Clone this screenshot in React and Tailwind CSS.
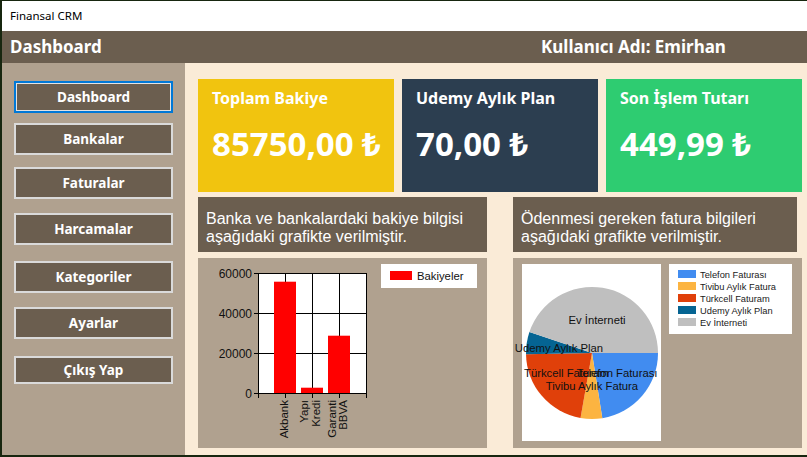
import React from 'react';

const menu = [
  { label: 'Dashboard', cls: 'mt-0 h-[32px]', active: true },
  { label: 'Bankalar', cls: 'mt-[10px] h-[32px]' },
  { label: 'Faturalar', cls: 'mt-[12px] h-[32px]' },
  { label: 'Harcamalar', cls: 'mt-[14px] h-[32px]' },
  { label: 'Kategoriler', cls: 'mt-[16px] h-[32px]' },
  { label: 'Ayarlar', cls: 'mt-[14px] h-[32px]' },
  { label: 'Çıkış Yap', cls: 'mt-[17px] h-[28px]' },
];

const cards = [
  { title: 'Toplam Bakiye', value: '85750,00 ₺', bg: 'bg-[#f1c40f]' },
  { title: 'Udemy Aylık Plan', value: '70,00 ₺', bg: 'bg-[#2c3e50]' },
  { title: 'Son İşlem Tutarı', value: '449,99 ₺', bg: 'bg-[#2ecc71]' },
];

// bar chart: 0..60000 -> y 135..15
const bars = [
  { x: 76, v: 55650 },
  { x: 103, v: 2650 },
  { x: 130, v: 28650 },
];
const yOf = (v) => 135 - (v / 60000) * 120;

const BarChart = () => (
  <svg width="289" height="190" className="block" style={{ fontFamily: '"Liberation Sans", Arial, sans-serif' }}>
    <rect x="60" y="15" width="108" height="120" fill="#fff" />
    {[15, 55, 95, 135].map((y) => (
      <line key={y} x1="56" y1={y + 0.5} x2="168.5" y2={y + 0.5} stroke="#000" />
    ))}
    {[87, 114, 141, 168].map((x) => (
      <line key={x} x1={x + 0.5} y1="15" x2={x + 0.5} y2="140" stroke="#000" />
    ))}
    <line x1="60.5" y1="15" x2="60.5" y2="140" stroke="#000" />
    {bars.map((b) => (
      <rect key={b.x} x={b.x} y={yOf(b.v)} width="22" height={135 - yOf(b.v)} fill="#ff0000" />
    ))}
    {[
      ['60000', 15],
      ['40000', 55],
      ['20000', 95],
      ['0', 135],
    ].map(([t, y]) => (
      <text key={t} x="54" y={y + 1} textAnchor="end" dominantBaseline="central" fontSize="12" fill="#111">
        {t}
      </text>
    ))}
    {[
      ['Akbank', 86],
      ['Yapı', 106],
      ['Kredi', 118],
      ['Garanti', 134],
      ['BBVA', 145],
    ].map(([t, x]) => (
      <text
        key={t}
        x={x}
        y="142"
        transform={`rotate(-90 ${x} 142)`}
        textAnchor="end"
        dominantBaseline="central"
        fontSize="11.5"
        fill="#111"
      >
        {t}
      </text>
    ))}
    <rect x="183" y="6" width="96" height="24" fill="#fff" />
    <rect x="192" y="13" width="22" height="9" fill="#ff0000" />
    <text x="219" y="18" dominantBaseline="central" fontSize="11.3" fill="#111">
      Bakiyeler
    </text>
  </svg>
);

const slices = [
  { name: 'Telefon Faturası', from: 0, to: 81, color: '#418cf0' },
  { name: 'Tivibu Aylık Fatura', from: 81, to: 100, color: '#fcb441' },
  { name: 'Türkcell Faturam', from: 100, to: 179, color: '#e0400a' },
  { name: 'Udemy Aylık Plan', from: 179, to: 198.5, color: '#056492' },
  { name: 'Ev İnterneti', from: 198.5, to: 360, color: '#bfbfbf' },
];

const arc = (cx, cy, r, a0, a1) => {
  const rad = (a) => (a * Math.PI) / 180;
  const x0 = cx + r * Math.cos(rad(a0));
  const y0 = cy + r * Math.sin(rad(a0));
  const x1 = cx + r * Math.cos(rad(a1));
  const y1 = cy + r * Math.sin(rad(a1));
  const large = a1 - a0 > 180 ? 1 : 0;
  return `M${cx},${cy} L${x0},${y0} A${r},${r} 0 ${large} 1 ${x1},${y1} Z`;
};

const PieChart = () => (
  <svg width="289" height="190" className="block overflow-visible" style={{ fontFamily: '"Liberation Sans", Arial, sans-serif' }}>
    <rect x="9" y="6" width="139" height="177" fill="#fff" />
    {slices.map((s) => (
      <path key={s.name} d={arc(79, 95, 66, s.from, s.to)} fill={s.color} />
    ))}
    <g fontSize="11.3" fill="#111" dominantBaseline="central">
      <text x="84" y="62" textAnchor="middle">Ev İnterneti</text>
      <text x="46" y="90" textAnchor="middle">Udemy Aylık Plan</text>
      <text x="11" y="115" textAnchor="start">Türkcell Faturam</text>
      <text x="104" y="115" textAnchor="middle">Telefon Faturası</text>
      <text x="79" y="128" textAnchor="middle">Tivibu Aylık Fatura</text>
    </g>
    <rect x="156" y="6" width="123" height="70" fill="#fff" />
    {slices.map((s, i) => (
      <g key={s.name}>
        <rect x="165" y={12 + i * 12} width="18" height="8" fill={s.color} />
        <text x="187" y={16.5 + i * 12} dominantBaseline="central" fontSize="9.3" fill="#1a1a1a">
          {s.name}
        </text>
      </g>
    ))}
  </svg>
);

export default function App() {
  return (
    <div className="w-[807px] h-[457px] overflow-hidden flex flex-col bg-white border-l-2 border-t border-b-2 border-[#17260f] font-['Noto_Sans',sans-serif]">
      {/* pencere başlığı */}
      <div className="h-[30px] shrink-0 flex items-center pl-2 text-[11.5px] text-black">Finansal CRM</div>

      <div className="h-[32px] shrink-0 bg-[#6b5e4f] flex items-center pl-2 text-white font-bold text-[17px]">
        <span className="w-[531px]">Dashboard</span>
        <span>Kullanıcı Adı: Emirhan</span>
      </div>

      <div className="flex-1 flex min-h-0">
        {/* menü */}
        <div className="w-[183px] shrink-0 bg-[#b0a18f] flex flex-col pl-3 pt-[18px]">
          {menu.map((m) => (
            <button
              key={m.label}
              className={`${m.cls} w-[159px] bg-[#6b5e4f] text-white font-bold text-[13.5px] flex items-center justify-center border-2 ${
                m.active ? 'border-[#0078d7] shadow-[inset_0_0_0_1px_#e3e3e3]' : 'border-[#dadada]'
              }`}
            >
              {m.label}
            </button>
          ))}
        </div>

        {/* içerik */}
        <div className="flex-1 bg-[#faebd7] pl-[13px] pt-4">
          <div className="flex gap-2">
            {cards.map((c) => (
              <div key={c.title} className={`${c.bg} w-[196px] h-[113px] pl-[14px] pt-[7px] text-white`}>
                <div className="text-[16px] font-bold leading-6">{c.title}</div>
                <div className="mt-[17px] text-[33px] font-bold leading-none">{c.value}</div>
              </div>
            ))}
          </div>

          <div className="mt-[5px] flex text-white font-['Liberation_Sans',Arial,sans-serif] text-[16px] leading-[18.4px]">
            <div className="w-[289px] h-[55px] bg-[#6b5e4f] pl-2 pt-[13px]">
              Banka ve bankalardaki bakiye bilgisi
              <br />
              aşağıdaki grafikte verilmiştir.
            </div>
            <div className="ml-[26px] w-[284px] h-[55px] bg-[#6b5e4f] pl-2 pt-[13px]">
              Ödenmesi gereken fatura bilgileri
              <br />
              aşağıdaki grafikte verilmiştir.
            </div>
          </div>

          <div className="mt-[6px] flex">
            <div className="w-[289px] h-[190px] bg-[#b0a18f]">
              <BarChart />
            </div>
            <div className="ml-[26px] w-[289px] h-[190px] bg-[#b0a18f]">
              <PieChart />
            </div>
          </div>
        </div>
      </div>
    </div>
  );
}
